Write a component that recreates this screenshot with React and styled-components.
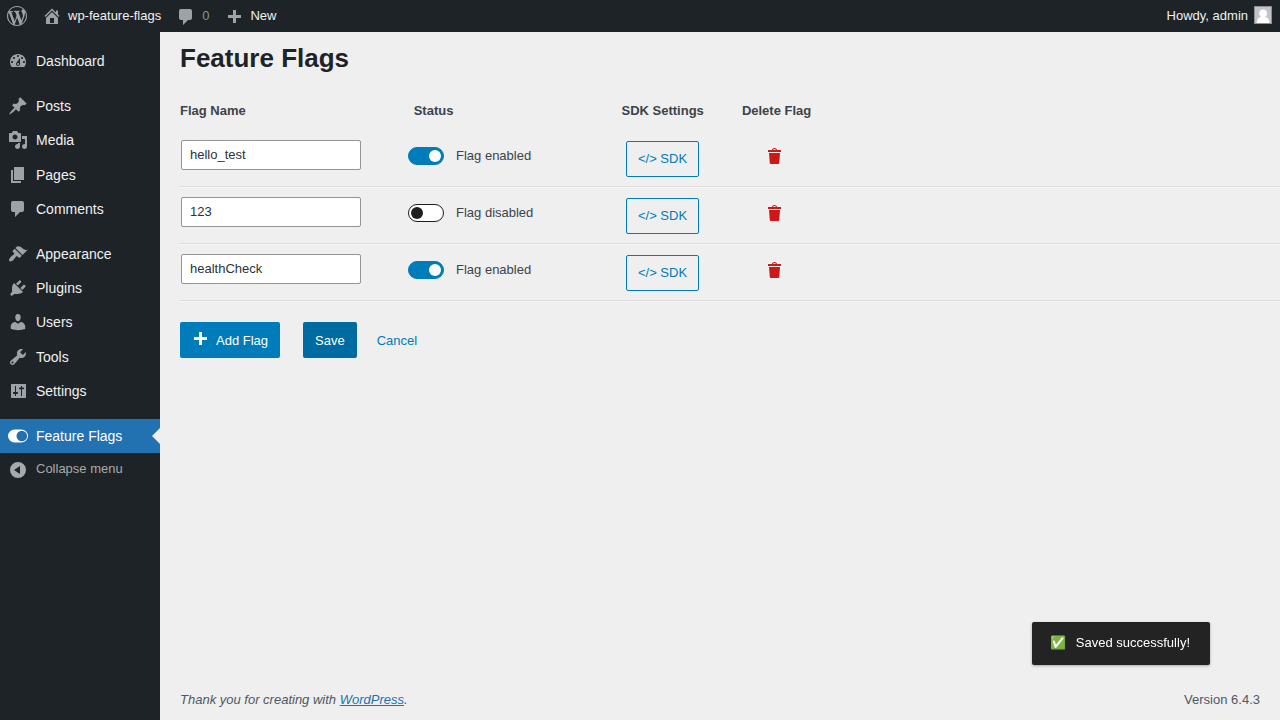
import React from 'react';
import styled, { createGlobalStyle, css } from 'styled-components';

const GlobalStyle = createGlobalStyle`
  *, *::before, *::after { box-sizing: border-box; }
  body {
    margin: 0;
    background: #efefef;
    color: #3c434a;
    font: 13px/1.4 "Liberation Sans", Arial, sans-serif;
    overflow: hidden;
  }
`;

const ICONS = {
  wordpress:
    'M20 10c0-5.51-4.49-10-10-10C4.48 0 0 4.49 0 10c0 5.52 4.48 10 10 10 5.51 0 10-4.48 10-10zM7.78 15.37L4.37 6.22c.55-.02 1.17-.08 1.17-.08.5-.06.44-1.13-.06-1.11 0 0-1.45.11-2.37.11-.18 0-.37 0-.58-.01C4.12 2.69 6.87 1.11 10 1.11c2.33 0 4.45.87 6.05 2.34-.68-.11-1.65.39-1.65 1.58 0 .74.45 1.36.9 2.1.35.61.55 1.36.55 2.46 0 1.49-1.4 5-1.4 5l-3.03-8.37c.54-.02.82-.17.82-.17.5-.05.44-1.25-.06-1.22 0 0-1.44.12-2.38.12-.87 0-2.33-.12-2.33-.12-.5-.03-.56 1.2-.06 1.22l.92.08 1.26 3.41zM17.41 10c.24-.64.74-1.87.43-4.25.7 1.29 1.05 2.71 1.05 4.25 0 3.29-1.73 6.24-4.4 7.78.97-2.59 1.94-5.2 2.92-7.78zM6.1 18.09C3.12 16.65 1.11 13.53 1.11 10c0-1.3.23-2.48.72-3.59C3.25 10.3 4.67 14.2 6.1 18.09zm4.03-6.63l2.58 6.98c-.86.29-1.76.45-2.71.45-.79 0-1.57-.11-2.29-.33.81-2.38 1.62-4.74 2.42-7.1z',
  home: 'M16 8.5l1.53 1.53-1.06 1.06L10 4.6l-6.47 6.49-1.06-1.06L10 2.5l4 4v-2h2v4zm-6-2.46l6 5.99V18H4v-5.97zM12 17v-5H8v5h4z',
  comment:
    'M5 2h9c1.1 0 2 .9 2 2v7c0 1.1-.9 2-2 2h-2l-5 5v-5H5c-1.1 0-2-.9-2-2V4c0-1.1.9-2 2-2z',
  plus: 'M17 7v3h-5v5H9v-5H4V7h5V2h3v5h5z',
  dashboard:
    'M3.76 16h12.48c1.1-1.37 1.76-3.11 1.76-5 0-4.42-3.58-8-8-8s-8 3.58-8 8c0 1.89.66 3.63 1.76 5zM10 4c.55 0 1 .45 1 1s-.45 1-1 1-1-.45-1-1 .45-1 1-1zM6 6c.55 0 1 .45 1 1s-.45 1-1 1-1-.45-1-1 .45-1 1-1zm8 0c.55 0 1 .45 1 1s-.45 1-1 1-1-.45-1-1 .45-1 1-1zm-5.37 5.55L12 7v6c0 1.1-.9 2-2 2s-2-.9-2-2c0-.57.24-1.08.63-1.45zM4 10c.55 0 1 .45 1 1s-.45 1-1 1-1-.45-1-1 .45-1 1-1zm12 0c.55 0 1 .45 1 1s-.45 1-1 1-1-.45-1-1 .45-1 1-1zm-5 3c0-.55-.45-1-1-1s-1 .45-1 1 .45 1 1 1 1-.45 1-1z',
  post: 'M10.44 3.02l1.82-1.82 6.36 6.35-1.83 1.82c-1.05-.68-2.48-.57-3.41.36l-.75.75c-.92.93-1.04 2.35-.35 3.41l-1.83 1.82-2.41-2.41-2.8 2.79c-.42.42-3.38 2.71-3.8 2.29s1.86-3.39 2.28-3.81l2.79-2.79L4.1 9.36l1.83-1.82c1.05.69 2.48.57 3.4-.36l.75-.75c.93-.92 1.05-2.35.36-3.41z',
  media:
    'M13 11V4c0-.55-.45-1-1-1h-1.67L9 1H5L3.67 3H2c-.55 0-1 .45-1 1v7c0 .55.45 1 1 1h10c.55 0 1-.45 1-1zM7 4.5c1.38 0 2.5 1.12 2.5 2.5S8.38 9.5 7 9.5 4.5 8.38 4.5 7 5.62 4.5 7 4.5zM14 6h5v10.5c0 1.38-1.12 2.5-2.5 2.5S14 17.88 14 16.5s1.12-2.5 2.5-2.5c.17 0 .34.02.5.05V9h-3V6zm-4 8.05V13h2v3.5c0 1.38-1.12 2.5-2.5 2.5S7 17.88 7 16.5 8.12 14 9.5 14c.17 0 .34.02.5.05z',
  page: 'M6 15V2h10v13H6zm-1 1h8v2H3V5h2v11z',
  appearance:
    'M14.48 11.06L7.41 3.99l1.5-1.5c.5-.56 2.3-.47 3.51.32 1.21.8 1.43 1.28 2.91 2.1 1.18.64 2.45 1.26 4.45.85zm-.71.71L6.7 4.7 4.93 6.47c-.39.39-.39 1.02 0 1.41l1.06 1.06c.39.39.39 1.03 0 1.42-.6.6-1.43 1.11-2.21 1.69-.35.26-.7.53-1.01.84C1.43 14.23.4 16.08 1.4 17.07c.99 1 2.84-.03 4.18-1.36.31-.31.58-.66.85-1.02.57-.78 1.08-1.61 1.69-2.21.39-.39 1.02-.39 1.41 0l1.06 1.06c.39.39 1.02.39 1.41 0z',
  plugins:
    'M13.11 4.36L9.87 7.6 8 5.73l3.24-3.24c.35-.34 1.05-.2 1.56.32.52.51.66 1.21.31 1.55zm-8 1.77l.91-1.12 9.01 9.01-1.19.84c-.71.71-2.63 1.16-3.82 1.16H6.14L4.9 17.26c-.59.59-1.54.59-2.12 0-.59-.58-.59-1.53 0-2.12l1.24-1.24v-3.88c0-1.13.4-3.19 1.09-3.89zm7.26 3.97l3.24-3.24c.34-.35 1.04-.21 1.55.31.52.51.66 1.21.31 1.55l-3.24 3.25z',
  users:
    'M10 9.25c-2.27 0-2.73-3.44-2.73-3.44C7 4.02 7.82 2 9.97 2c2.16 0 2.98 2.02 2.71 3.81 0 0-.41 3.44-2.68 3.44zm0 2.57L12.72 10c2.39 0 4.52 2.33 4.52 4.53v2.49s-3.65 1.13-7.24 1.13c-3.65 0-7.24-1.13-7.24-1.13v-2.49c0-2.25 1.94-4.48 4.47-4.48z',
  tools:
    'M16.68 9.77c-1.34 1.34-3.3 1.67-4.95.99l-5.41 6.52c-.99.99-2.59.99-3.58 0s-.99-2.59 0-3.57l6.52-5.42c-.68-1.65-.35-3.61.99-4.95 1.28-1.28 3.12-1.62 4.72-1.06l-2.89 2.89 2.82 2.82 2.86-2.87c.53 1.58.18 3.39-1.08 4.65zM3.81 16.21c.4.39 1.04.39 1.43 0 .4-.4.4-1.04 0-1.43-.39-.4-1.03-.4-1.43 0-.39.39-.39 1.03 0 1.43z',
  settings:
    'M3.5 3h14c.3 0 .5.2.5.5v13c0 .3-.2.5-.5.5h-14c-.3 0-.5-.2-.5-.5v-13c0-.3.2-.5.5-.5zM7 5v6H5.500l-.5.5v1l.5.5H7v2h1v-2h1.500l.5-.5v-1l-.5-.5H8V5zm6 0v1.500h-1.500l-.5.5v.8l.5.5H13V15h1V8.300h1.500l.5-.5V7l-.5-.5H14V5z',
  toggle:
    'M6.5 3.5h7a6.5 6.5 0 0 1 0 13h-7a6.5 6.5 0 0 1 0-13zM13.8 4.700a5.300 5.300 0 1 0 0 10.600a5.300 5.300 0 1 0 0-10.600z',
  collapse: 'M10 2a8 8 0 1 0 0 16a8 8 0 1 0 0-16zM12 6v8l-6-4z',
};

const Svg = styled.svg`
  display: block;
  flex: none;
  fill: currentColor;
  fill-rule: evenodd;
`;

const Icon = ({ name, size = 20 }) => (
  <Svg width={size} height={size} viewBox="0 0 20 20" aria-hidden="true">
    <path d={ICONS[name]} />
  </Svg>
);

const Page = styled.div`
  display: flex;
  flex-direction: column;
  height: 720px;
`;

const AdminBar = styled.header`
  display: flex;
  align-items: center;
  flex: none;
  height: 32px;
  padding: 0 8px 0 7px;
  background: #1d2327;
  color: #f0f0f1;
  line-height: 32px;
`;

const BarItem = styled.div`
  display: flex;
  align-items: center;
  gap: 6px;
  margin-right: ${(p) => p.$after || 0}px;

  svg { color: #9ca2a7; }
`;

const Count = styled.span`
  color: #8c9196;
`;

const Lowered = styled.span`
  padding-top: ${(p) => p.$by}px;
`;

const Account = styled.div`
  display: flex;
  align-items: center;
  gap: 6px;
  margin-left: auto;
`;

const Avatar = styled.svg`
  display: block;
  width: 18px;
  height: 18px;
  margin-top: -2px;
`;

const Body = styled.div`
  display: flex;
  flex: 1;
  min-height: 0;
`;

const Sidebar = styled.nav`
  flex: none;
  width: 160px;
  padding-top: 12.05px;
  background: #1d2327;
`;

const MenuGroup = styled.div`
  margin-bottom: 11px;
`;

const MenuItem = styled.a`
  position: relative;
  display: flex;
  align-items: center;
  gap: 8px;
  height: 34.2px;
  padding-left: 8px;
  color: #f0f0f1;
  font-size: 14px;
  line-height: 18.2px;

  svg {
    margin-bottom: 0.2px;
    color: #9ca2a7;
  }

  ${(p) =>
    p.$current &&
    css`
      background: #2271b1;
      color: #fff;

      svg { color: #fff; }

      &::after {
        content: '';
        position: absolute;
        top: 50%;
        right: 0;
        margin-top: -8px;
        border: 8px solid transparent;
        border-right-color: #efefef;
        border-left-width: 0;
      }
    `}
`;

const Collapse = styled.a`
  display: flex;
  align-items: flex-start;
  gap: 8px;
  padding: 7px 0 0 8px;
  color: #a7aaad;
  font-size: 13px;
  line-height: 18px;
`;

const Main = styled.main`
  display: flex;
  flex-direction: column;
  flex: 1;
  min-width: 0;
  padding-left: 20px;
`;

const Title = styled.h1`
  margin: 8px 0 0;
  color: #1d2327;
  font-size: 26px;
  font-weight: 700;
  line-height: 36px;
`;

const columns = css`
  display: grid;
  grid-template-columns: 228px 213.5px 116px 1fr;
`;

const TableHead = styled.div`
  ${columns}
  margin: 26px 0 11px;
  font-weight: 600;
  line-height: 18px;
`;

const HeadCell = styled.div`
  padding-left: ${(p) => p.$inset || 0}px;
`;

const Row = styled.div`
  ${columns}
  height: 57px;
  border-bottom: 1px solid #f6f7f7;
  box-shadow: inset 0 -1px 0 #dcdcde;
`;

const NameInput = styled.input`
  width: 180px;
  height: 30px;
  margin: 9px 0 0 1px;
  padding: 0 8px 2px;
  border: 1px solid #949494;
  border-radius: 2px;
  background: #fff;
  color: #2c3338;
  font: inherit;
`;

const StatusCell = styled.div`
  display: flex;
  align-items: center;
  gap: 12px;
  height: 18px;
  margin-top: 16px;
`;

const Switch = styled.span`
  display: flex;
  align-items: center;
  justify-content: ${(p) => (p.$on ? 'flex-end' : 'flex-start')};
  width: 36px;
  height: 18px;
  padding: 0 2px;
  border: 1px solid ${(p) => (p.$on ? '#007cba' : '#1e1e1e')};
  border-radius: 9px;
  background: ${(p) => (p.$on ? '#007cba' : '#fff')};

  &::after {
    content: '';
    width: 12px;
    height: 12px;
    border-radius: 50%;
    background: ${(p) => (p.$on ? '#fff' : '#1e1e1e')};
  }
`;

const Button = styled.button`
  display: flex;
  align-items: center;
  justify-content: center;
  height: 36px;
  padding: 2px 12px 0;
  border: 0;
  border-radius: 2px;
  background: ${(p) => p.$fill || 'transparent'};
  color: ${(p) => (p.$fill ? '#fff' : '#007cba')};
  font: inherit;
  white-space: nowrap;
`;

const SdkButton = styled(Button)`
  width: 73px;
  margin: 10px 0 0 4.5px;
  padding: 0 11px;
  border: 1px solid #007cba;
`;

const DeleteButton = styled.button`
  display: block;
  width: 20px;
  height: 20px;
  margin: 15px 0 0 26.5px;
  padding: 0;
  border: 0;
  background: none;
  color: #cc1818;
`;

const Actions = styled.div`
  display: flex;
  margin-top: 20px;
`;

const AddButton = styled(Button)`
  width: 100px;
  margin-right: 23px;
  padding: 2px 12px 0 10px;
  gap: 6px;
  justify-content: flex-start;

  svg { margin-bottom: 2px; }
`;

const CancelButton = styled(Button)`
  margin-left: 8px;
`;

const Footer = styled.footer`
  display: flex;
  justify-content: space-between;
  margin-top: auto;
  padding: 0 20px 11px 0;
  color: #50575e;
  line-height: 19px;

  a { color: #2271b1; text-decoration: underline; }
`;

const Toast = styled.div`
  position: fixed;
  right: 70px;
  bottom: 55px;
  display: flex;
  align-items: center;
  justify-content: space-between;
  width: 178px;
  height: 43px;
  padding: 0 20px 0 18px;
  border-radius: 2px;
  background: #232323;
  color: #fff;
  white-space: nowrap;
  box-shadow: 0 1px 3px rgba(0, 0, 0, 0.3);
`;

const menu = [
  [['dashboard', 'Dashboard']],
  [['post', 'Posts'], ['media', 'Media'], ['page', 'Pages'], ['comment', 'Comments']],
  [
    ['appearance', 'Appearance'],
    ['plugins', 'Plugins'],
    ['users', 'Users'],
    ['tools', 'Tools'],
    ['settings', 'Settings'],
  ],
];

const flags = [
  { name: 'hello_test', on: true },
  { name: '123', on: false },
  { name: 'healthCheck', on: true },
];

const TrashIcon = () => (
  <Svg width="20" height="20" viewBox="0 0 20 20" aria-hidden="true">
    <path d="M4.300 4H8c.2-1.100 1.100-1.900 2.500-1.900S12.800 2.900 13 4h3.700l.3.300V6H4V4.300zM9 4h3c-.2-.6-.7-1-1.500-1S9.200 3.400 9 4zM5 7h11l-.8 10.200c-.1.500-.4.800-.9.800H6.700c-.5 0-.8-.3-.9-.8z" />
  </Svg>
);

export default function App() {
  return (
    <Page>
      <GlobalStyle />
      <AdminBar>
        <BarItem $after={15}>
          <Icon name="wordpress" />
        </BarItem>
        <BarItem $after={15}>
          <Icon name="home" />
          <span>wp-feature-flags</span>
        </BarItem>
        <BarItem $after={15}>
          <Lowered $by={2}><Icon name="comment" /></Lowered>
          <Count>0</Count>
        </BarItem>
        <BarItem>
          <Lowered $by={4}><Icon name="plus" /></Lowered>
          <span>New</span>
        </BarItem>
        <Account>
          <span>Howdy, admin</span>
          <Avatar viewBox="0 0 18 18" aria-hidden="true">
            <rect x="0.5" y="0.5" width="17" height="17" fill="#c3c4c7" stroke="#8c8f94" />
            <circle cx="9.1" cy="7.300" r="3.900" fill="#fff" />
            <path d="M2.700 17c0-3.500 2-5.800 4.300-6.300h4.200c2.300.5 4.300 2.800 4.300 6.300z" fill="#fff" />
          </Avatar>
        </Account>
      </AdminBar>
      <Body>
        <Sidebar>
          {menu.map((group) => (
            <MenuGroup key={group[0][1]}>
              {group.map(([icon, label]) => (
                <MenuItem key={label}>
                  <Icon name={icon} />
                  {label}
                </MenuItem>
              ))}
            </MenuGroup>
          ))}
          <MenuItem $current>
            <Icon name="toggle" />
            Feature Flags
          </MenuItem>
          <Collapse>
            <Icon name="collapse" />
            Collapse menu
          </Collapse>
        </Sidebar>
        <Main>
          <Title>Feature Flags</Title>
          <TableHead>
            <HeadCell>Flag Name</HeadCell>
            <HeadCell $inset={5.7}>Status</HeadCell>
            <HeadCell>SDK Settings</HeadCell>
            <HeadCell $inset={4.4}>Delete Flag</HeadCell>
          </TableHead>
          {flags.map((flag) => (
            <Row key={flag.name}>
              <NameInput defaultValue={flag.name} />
              <StatusCell>
                <Switch $on={flag.on} />
                {flag.on ? 'Flag enabled' : 'Flag disabled'}
              </StatusCell>
              <SdkButton>{'</> SDK'}</SdkButton>
              <DeleteButton aria-label="Delete flag">
                <TrashIcon />
              </DeleteButton>
            </Row>
          ))}
          <Actions>
            <AddButton $fill="#007cba">
              <Icon name="plus" />
              Add Flag
            </AddButton>
            <Button $fill="#006ba1">Save</Button>
            <CancelButton>Cancel</CancelButton>
          </Actions>
          <Footer>
            <em>
              Thank you for creating with <a>WordPress</a>.
            </em>
            <span>Version 6.4.3</span>
          </Footer>
        </Main>
      </Body>
      <Toast>
        <span>✅</span>
        <span>Saved successfully!</span>
      </Toast>
    </Page>
  );
}
